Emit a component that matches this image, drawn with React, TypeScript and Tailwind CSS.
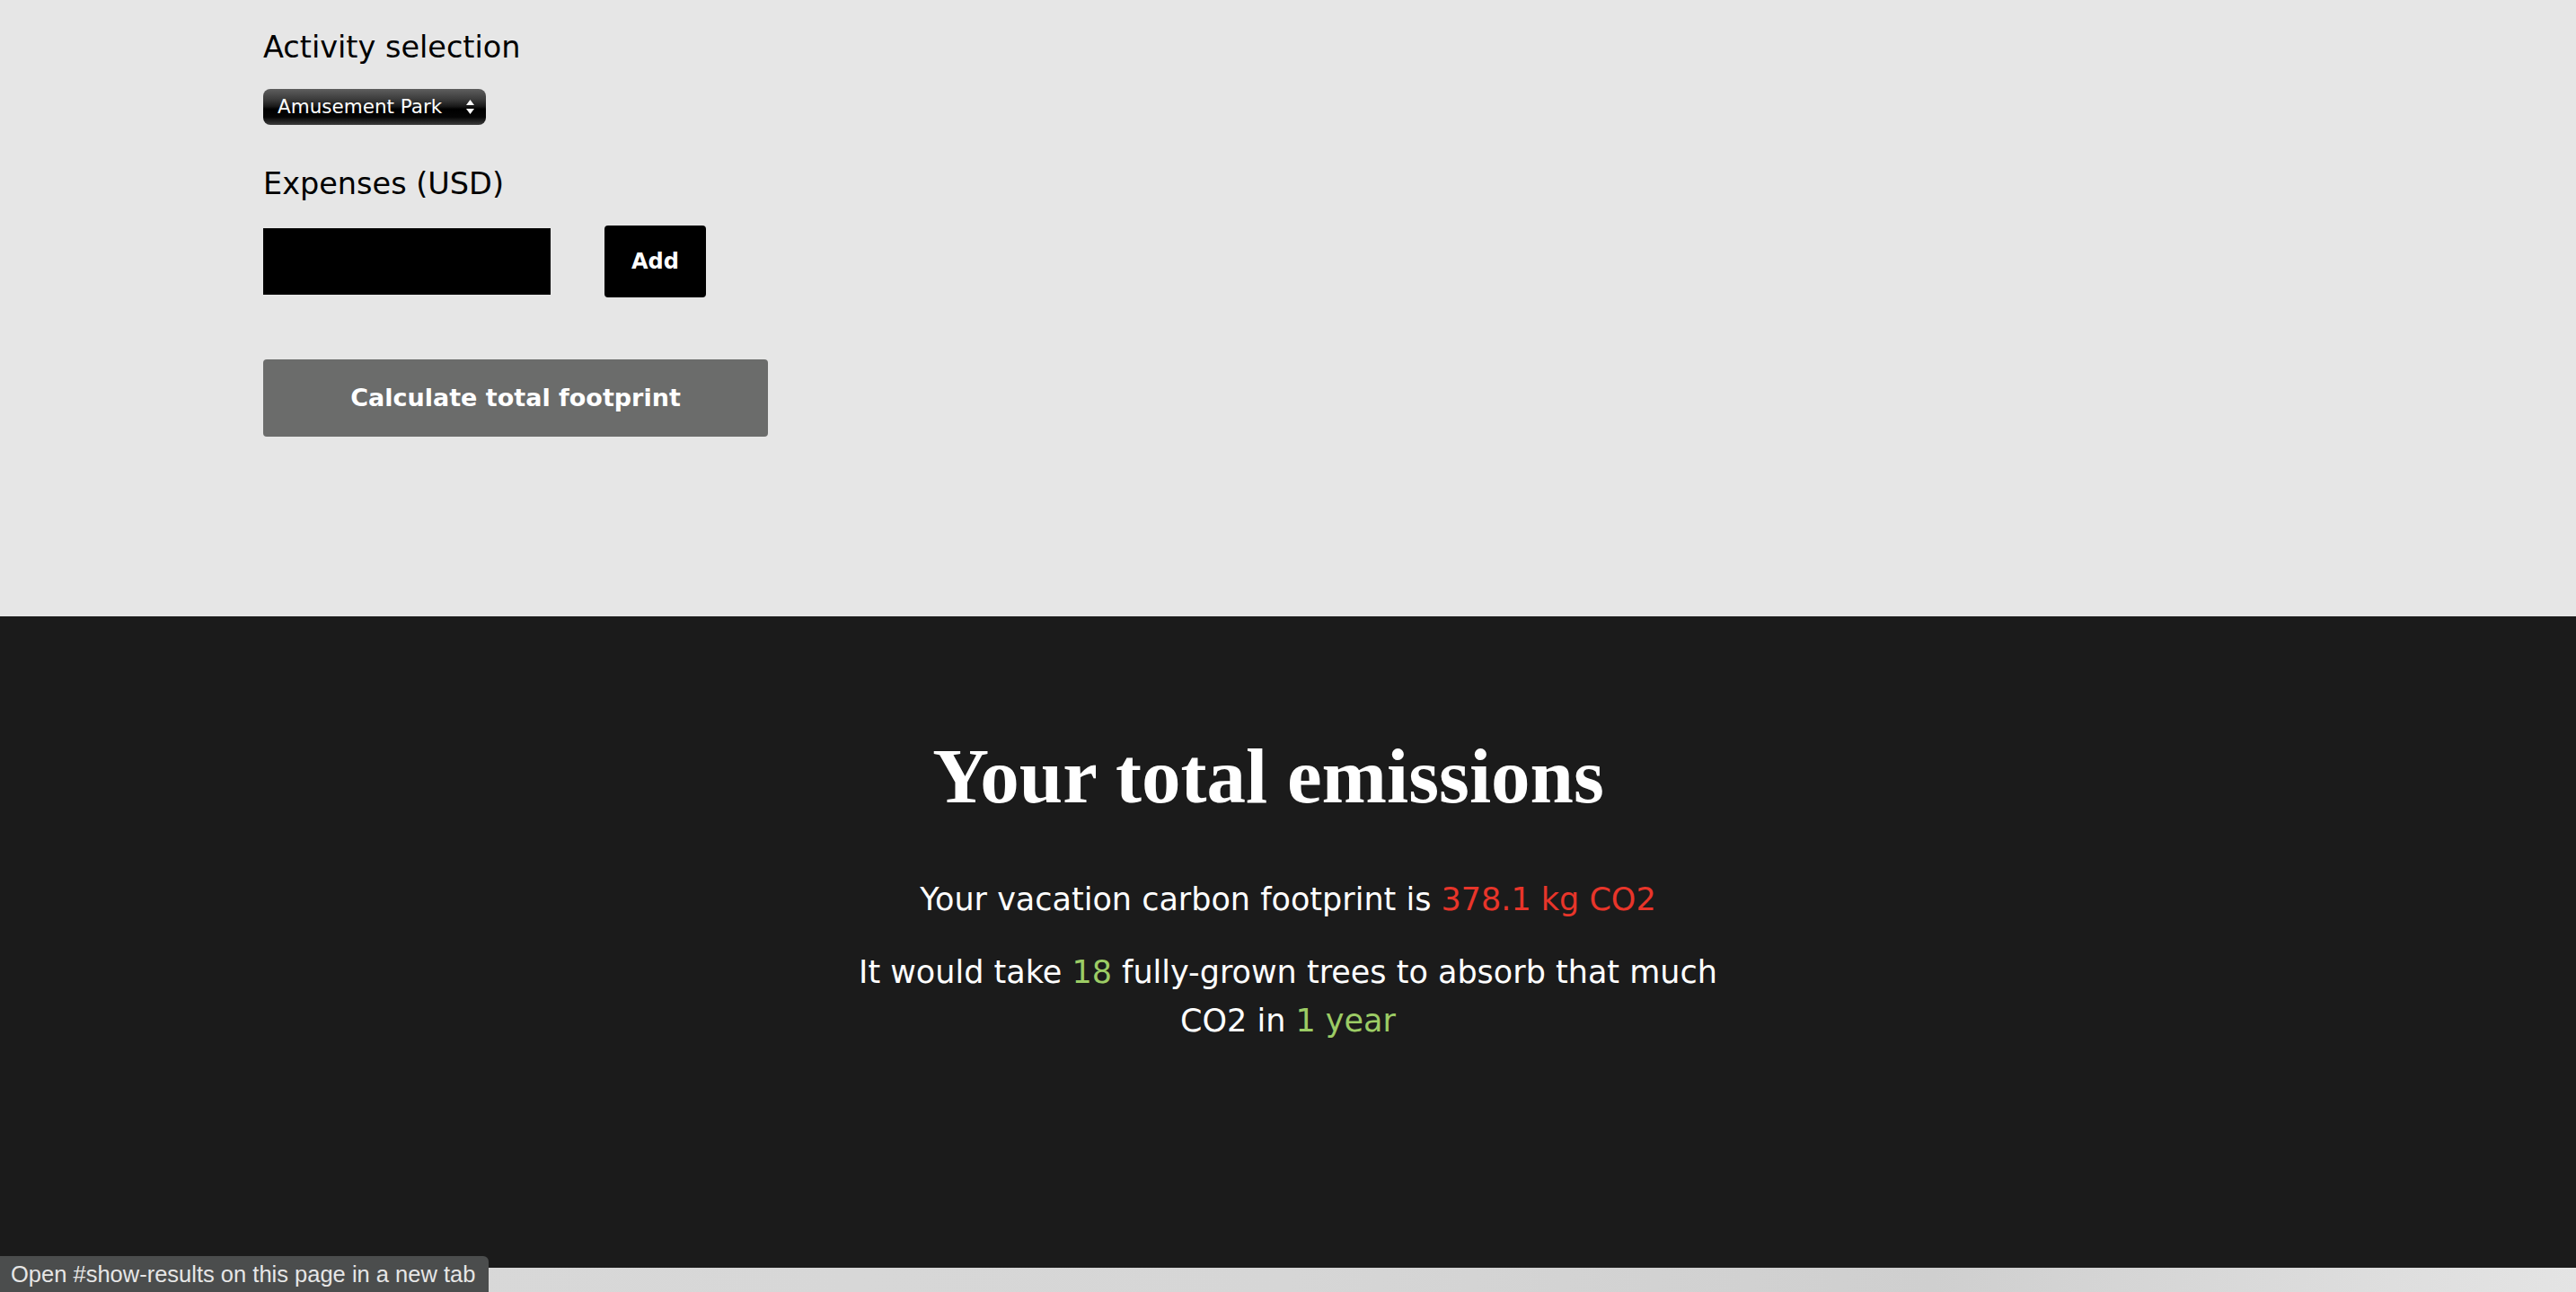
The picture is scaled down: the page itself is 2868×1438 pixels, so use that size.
import React from "react";

export default function App() {
  return (
    <div className="relative flex min-h-screen flex-col font-['DejaVu_Sans',sans-serif]">
      <section className="h-[686px] bg-[#e6e6e6] pl-[293px] pt-[29px]">
        <h3 className="text-[33.5px] leading-[48px] font-normal text-black">Activity selection</h3>
        <div className="mt-[22px] flex h-[40px] w-[248px] items-center justify-between rounded-[8px] bg-[linear-gradient(to_bottom,#5e5e5e_0%,#3a3a3a_30%,#1a1a1a_48%,#000000_56%,#050505_78%,#3c3c3c_100%)] pl-[16px] pr-[12px]">
          <span className="text-[21.5px] font-normal leading-none text-white">Amusement Park</span>
          <svg width="11" height="18" viewBox="0 0 11 18">
            <polygon points="5.5,1 10,7 1,7" fill="white" />
            <polygon points="1,11 10,11 5.5,17" fill="white" />
          </svg>
        </div>
        <h3 className="mt-[42px] text-[33.5px] leading-[48px] font-normal text-black">Expenses (USD)</h3>
        <div className="mt-[22px] flex items-center gap-[60px]">
          <input className="h-[74px] w-[320px] bg-black text-white outline-none" />
          <button className="h-[80px] w-[113px] rounded-[4px] bg-black text-[24px] font-bold text-white">Add</button>
        </div>
        <button className="mt-[69px] h-[86px] w-[562px] rounded-[4px] bg-[#6b6c6b] text-[27px] font-bold text-white">
          Calculate total footprint
        </button>
      </section>
      <section className="flex h-[725px] flex-col items-center bg-[#1b1b1b] pt-[126px] text-white">
        <h2 className="pr-[44px] font-['Liberation_Serif',serif] text-[87px] leading-[104px] font-bold">Your total emissions</h2>
        <p className="mt-[58px] text-center text-[35px] leading-[54px]">
          Your vacation carbon footprint is <span className="text-[#e8352a]">378.1 kg CO2</span>
        </p>
        <p className="mt-[27px] max-w-[1000px] text-center text-[35px] leading-[54px]">
          It would take <span className="text-[#9ccc65]">18</span> fully-grown trees to absorb that much CO2 in{" "}
          <span className="text-[#9ccc65]">1 year</span>
        </p>
      </section>
      <div className="h-[27px] bg-[linear-gradient(100deg,#d9d9d9_0%,#d6d6d6_50%,#cfcfcf_75%,#e4e4e4_100%)]" />
      <div className="absolute bottom-0 left-0 flex h-[40px] w-[544px] items-center rounded-tr-[6px] bg-[#4b4d4d] pl-[12px] font-['Liberation_Sans',sans-serif] text-[25.5px] text-[#e6e6e6]">
        Open #show-results on this page in a new tab
      </div>
    </div>
  );
}
